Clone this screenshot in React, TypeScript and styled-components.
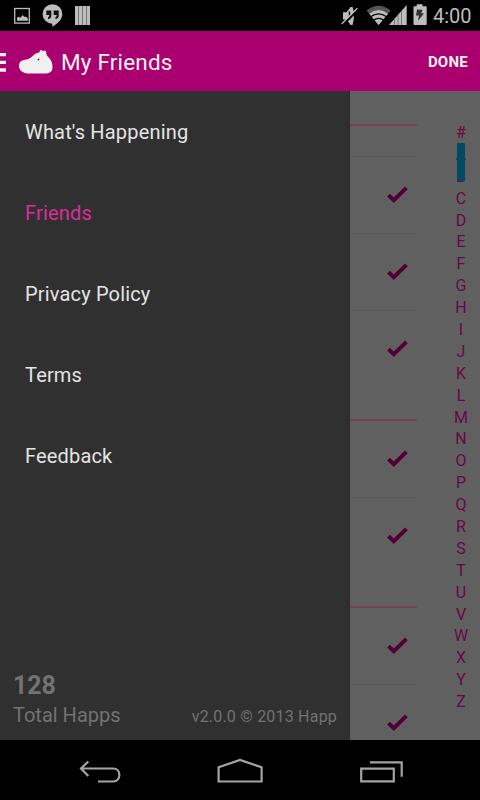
import React from "react";
import styled, { createGlobalStyle } from "styled-components";

const Global = createGlobalStyle`
  * { box-sizing: border-box; }
  body { margin: 0; background: #000; font-family: Roboto, sans-serif; }
`;

const Screen = styled.div`
  width: 480px;
  height: 800px;
  display: flex;
  flex-direction: column;
  overflow: hidden;
  background: #000;
`;

const StatusBar = styled.div`
  height: 31px;
  flex: none;
  display: flex;
  justify-content: space-between;
`;

const StatusGroup = styled.div`
  display: flex;
  svg { display: block; }
`;

const Clock = styled.span`
  width: 47px;
  color: #bdbdbd;
  font-size: 20px;
  line-height: 33px;
  letter-spacing: -0.05px;
`;

const ActionBar = styled.header`
  height: 60px;
  flex: none;
  display: flex;
  align-items: center;
  background: #aa006f;
  color: #f0f0f0;
  svg { display: block; }
`;

const Title = styled.h1`
  margin: 0 0 0 5px;
  flex: 1;
  font-size: 22.5px;
  font-weight: 400;
  line-height: 28px;
  letter-spacing: 0.18px;
  padding-top: 2px;
`;

const Done = styled.button`
  border: 0;
  padding: 2px 12px 0 0;
  background: none;
  color: #f0f0f0;
  font: 700 15px Roboto, sans-serif;
  letter-spacing: 0.25px;
`;

const Body = styled.div`
  flex: 1;
  min-height: 0;
  display: flex;
  background: #606060;
`;

const Drawer = styled.nav`
  width: 350px;
  flex: none;
  display: flex;
  flex-direction: column;
  background: linear-gradient(to right, #303030 346px, #2d2d2d 350px);
`;

const MenuItem = styled.a<{ $active?: boolean }>`
  height: 81px;
  padding: 1px 0 0 25px;
  display: flex;
  align-items: center;
  font-size: 20px;
  letter-spacing: 0.17px;
  color: ${(p) => (p.$active ? "#d92f9a" : "#e4e4e4")};
`;

const DrawerFooter = styled.footer`
  margin-top: auto;
  padding: 0 13px 13px 13px;
  display: flex;
  align-items: flex-end;
  justify-content: space-between;
  color: #727272;
`;

const Count = styled.div`
  font-size: 25px;
  font-weight: 700;
  line-height: 30px;
  letter-spacing: -0.1px;
`;

const CountLabel = styled.div`
  font-size: 20px;
  line-height: 24px;
  margin-top: 2px;
  letter-spacing: 0;
`;

const Version = styled.div`
  font-size: 16px;
  line-height: 20px;
  letter-spacing: 0.2px;
`;

const List = styled.div`
  width: 67px;
  overflow: hidden;
`;

const SectionHead = styled.div<{ $height: number }>`
  height: ${(p) => p.$height}px;
  border-bottom: 2px solid #793f57;
`;

const Gap = styled.div`
  height: 31px;
  border-bottom: 1px solid #5a5a5a;
`;

const Row = styled.div<{ $line?: boolean }>`
  height: 77px;
  padding-left: 37px;
  border-bottom: 1px solid ${(p) => (p.$line ? "#5a5a5a" : "transparent")};
  display: flex;
  align-items: center;
`;

const IndexColumn = styled.div`
  width: 26px;
  margin-left: 31px;
  padding-top: 31px;
  display: flex;
  flex-direction: column;
  color: #680845;
`;

const Letter = styled.span`
  height: 21.9px;
  line-height: 22px;
  font-size: 16px;
  text-align: center;
  position: relative;
`;

const FastScroll = styled.i`
  position: absolute;
  left: 9px;
  top: -1px;
  width: 8px;
  height: 38px;
  border-radius: 1px;
  background: #004a64;
  z-index: 1;
`;

const NavBar = styled.div`
  height: 60px;
  flex: none;
  svg { display: block; }
`;

const Check = () => (
  <svg width="22" height="18" viewBox="0 0 22 18" fill="none" stroke="#500033" strokeWidth="3.9">
    <path d="M1.5 9.2 6.8 14.2 19.4 1.9" />
  </svg>
);

const rows = (lines: boolean[]) => lines.map((l, i) => <Row key={i} $line={l}><Check /></Row>);

const menu = ["What's Happening", "Friends", "Privacy Policy", "Terms", "Feedback"];

export default function App() {
  return (
    <Screen>
      <Global />
      <StatusBar>
        <StatusGroup>
          <svg width="100" height="31" fill="#bdbdbd">
            <rect x="14.7" y="8.5" width="14.6" height="14.6" fill="none" stroke="#bdbdbd" strokeWidth="1.3" />
            <path d="M17 20.8v-3l2-1 1.5 1 2.2-2.8 1.8 2.1 1.4-.6 2 2v2.3z" />
            <path d="M52.5 4.2a9.8 9.8 0 0 1 9.8 9.8c0 5.4-4.6 9.8-10 12.8v-3a9.8 9.8 0 1 1 .2-19.6z" />
            <path d="M46.3 10.5h5v5.2q0 3-3.3 3.2v-1.6q1.4-.2 1.4-2.2h-3.1zM53.7 10.5h5v5.2q0 3-3.3 3.2v-1.6q1.4-.2 1.4-2.2h-3.1z" fill="#101010" />
            <rect x="75" y="6" width="15" height="19" fill="#757575" />
            <path d="M75 6h3v19h-3zM79 6h3v19h-3zM83 6h3v19h-3zM87 6h3v19h-3z" />
          </svg>
        </StatusGroup>
        <StatusGroup>
          <svg width="93" height="31" viewBox="340 0 93 31" fill="#bdbdbd">
            <path d="M343 12.3h3.6l4-5.3h2q2.6 8.5 0 18h-2l-4-5.5H343z" />
            <path d="M349.5 11.5v8" stroke="#000" strokeWidth="1.4" />
            <path d="M342.8 24.7 358.3 9.3" stroke="#000" strokeWidth="2.5" />
            <path d="M341.6 24 357.3 8.3" stroke="#bdbdbd" strokeWidth="1.4" />
            <path d="M366.5 10.5Q378.5 1 390.7 10.5L378.6 25z" fill="#555" />
            <path d="M369.2 13.7Q378.6 6.5 388 13.7L378.6 25z" />
            <path d="M370.6 16.8q8-6 16 0M373.3 20.2q5.3-3.8 10.6 0" fill="none" stroke="#000" strokeWidth="1.2" />
            <path d="M389 25 406.7 5v20z" />
            <path d="M394.5 18v7M398 14v11M401.5 11v14" stroke="#666" strokeWidth=".8" />
            <path d="M416.7 4.3h5.8v2h3.2q1 0 1 1V24q0 1-1 1h-11.2q-1 0-1-1V7.3q0-1 1-1h2.2z" />
            <path d="m417 9.5 5.5.3-1.2 3.5 2.7.2-6 7.3 1-5.3h-3z" fill="#303030" />
          </svg>
          <Clock>4:00</Clock>
        </StatusGroup>
      </StatusBar>
      <ActionBar>
        <svg width="56" height="60" viewBox="0 31 56 60" fill="#f0f0f0">
          <path d="M0 53h6v3.3H0zM0 60.7h6V64H0zM0 68.3h6v3.4H0z" />
          <path d="M20.5 61.6c2-1.5 5-1.5 8-2.5 4-1.5 5-5.8 10.8-6.5.2-1.8 1.2-3.2 2.4-2.5l1.4 1.3c1-1.3 2.5-1 3 .4l.6 3.5c3.4 3 5.8 6.7 5.8 11.5 0 5.2-2.5 6.7-9 6.7H27.5c-7.8 0-10.7-8-7-11.9z" />
          <circle cx="38.5" cy="59.5" r=".9" fill="#8b0060" />
        </svg>
        <Title>My Friends</Title>
        <Done>DONE</Done>
      </ActionBar>
      <Body>
        <Drawer>
          {menu.map((name) => <MenuItem key={name} $active={name === "Friends"}>{name}</MenuItem>)}
          <DrawerFooter>
            <div>
              <Count>128</Count>
              <CountLabel>Total Happs</CountLabel>
            </div>
            <Version>v2.0.0 © 2013 Happ</Version>
          </DrawerFooter>
        </Drawer>
        <List>
          <SectionHead $height={35} />
          <Gap />
          {rows([true, true, false])}
          <SectionHead $height={33} />
          {rows([true, false])}
          <SectionHead $height={33} />
          {rows([true, false])}
        </List>
        <IndexColumn>
          {"#ABCDEFGHIJKLMNOPQRSTUVWXYZ".split("").map((c) => (
            <Letter key={c}>{c}{c === "A" && <FastScroll />}</Letter>
          ))}
        </IndexColumn>
      </Body>
      <NavBar>
        <svg width="480" height="60" viewBox="0 740 480 60" fill="none" stroke="#a4a4a4" strokeWidth="2.2">
          <path d="M80.5 768.5h32.5c8.5 0 8.5 13 0 13H98M88.3 761.5l-7.3 7 7.3 7.5" />
          <path d="M218.6 781.5V767.3L240 760l21.6 7.3v14.2z" />
          <path d="M361.2 768.7h32.6v12.6H361.2zM370 762.4h31.7v14.3" />
        </svg>
      </NavBar>
    </Screen>
  );
}
